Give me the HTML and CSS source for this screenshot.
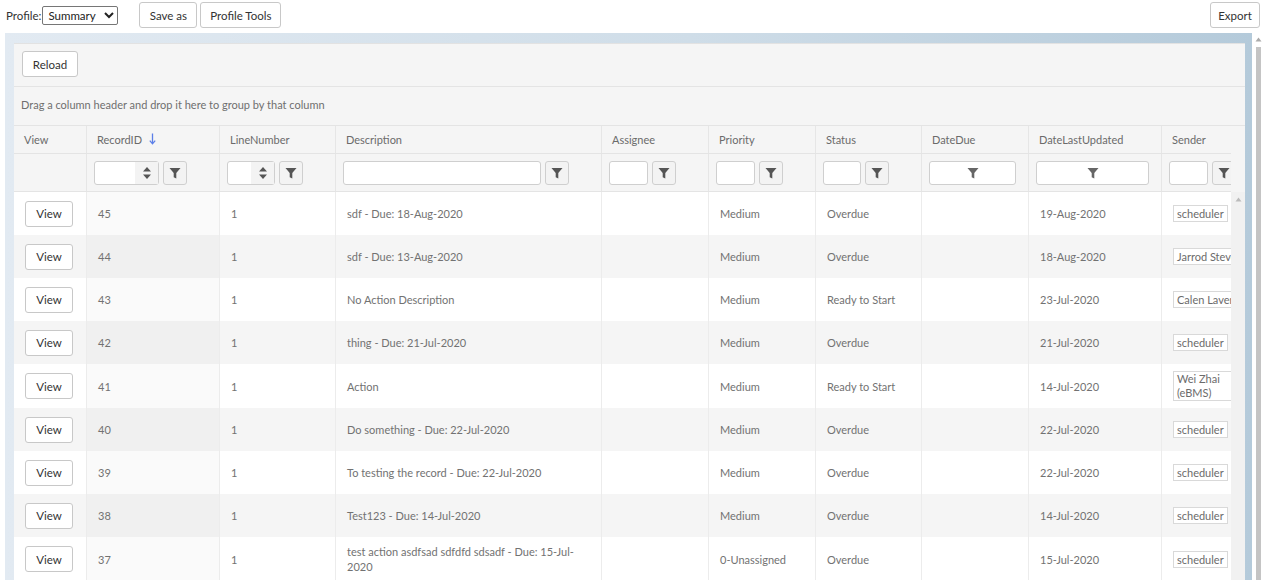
FILE: index.html
```html
<!DOCTYPE html>
<html>
<head>
<meta charset="utf-8">
<link rel="stylesheet" href="styles.css">
</head>
<body>
<div class="topbar">
  <label class="profile">Profile:<select class="sel"><option>Summary</option></select></label>
  <button class="btn top-btn save">Save as</button>
  <button class="btn top-btn">Profile Tools</button>
  <span class="grow"></span>
  <button class="btn top-btn export">Export</button>
</div>
<div class="main">
  <div class="frame">
    <div class="panel">
      <div class="toolbar"><button class="btn reload">Reload</button></div>
      <div class="group">Drag a column header and drop it here to group by that column</div>
      <div class="head">
        <div class="clip">
          <div class="row hdr">
            <div class="c">View</div>
            <div class="c">RecordID <svg class="sort" width="7" height="12" viewBox="0 0 7 12"><path d="M3.5 0.5V10.5M0.8 7.6L3.5 10.8L6.2 7.6" fill="none" stroke="#5b7fe8" stroke-width="1.3"/></svg></div>
            <div class="c">LineNumber</div>
            <div class="c">Description</div>
            <div class="c">Assignee</div>
            <div class="c">Priority</div>
            <div class="c">Status</div>
            <div class="c">DateDue</div>
            <div class="c">DateLastUpdated</div>
            <div class="c">Sender</div>
          </div>
          <div class="row flt">
            <div class="c"></div>
            <div class="c f"><span class="inp num"><span class="spin"><svg width="8" height="14" viewBox="0 0 8 14"><path d="M4 1L8 5.5H0Z M0 8.5H8L4 13Z" fill="#555"/></svg></span></span><span class="fb"><svg width="12" height="12" viewBox="0 0 12 12"><path d="M0.5 1H11.5L7.3 6V11.5L4.7 10.2V6Z" fill="#555"/></svg></span></div>
            <div class="c f"><span class="inp num"><span class="spin"><svg width="8" height="14" viewBox="0 0 8 14"><path d="M4 1L8 5.5H0Z M0 8.5H8L4 13Z" fill="#555"/></svg></span></span><span class="fb"><svg width="12" height="12" viewBox="0 0 12 12"><path d="M0.5 1H11.5L7.3 6V11.5L4.7 10.2V6Z" fill="#555"/></svg></span></div>
            <div class="c f"><span class="inp"></span><span class="fb"><svg width="12" height="12" viewBox="0 0 12 12"><path d="M0.5 1H11.5L7.3 6V11.5L4.7 10.2V6Z" fill="#555"/></svg></span></div>
            <div class="c f"><span class="inp"></span><span class="fb"><svg width="12" height="12" viewBox="0 0 12 12"><path d="M0.5 1H11.5L7.3 6V11.5L4.7 10.2V6Z" fill="#555"/></svg></span></div>
            <div class="c f"><span class="inp"></span><span class="fb"><svg width="12" height="12" viewBox="0 0 12 12"><path d="M0.5 1H11.5L7.3 6V11.5L4.7 10.2V6Z" fill="#555"/></svg></span></div>
            <div class="c f"><span class="inp"></span><span class="fb"><svg width="12" height="12" viewBox="0 0 12 12"><path d="M0.5 1H11.5L7.3 6V11.5L4.7 10.2V6Z" fill="#555"/></svg></span></div>
            <div class="c fd"><span class="inp date"><svg width="12" height="12" viewBox="0 0 12 12"><path d="M0.5 1H11.5L7.3 6V11.5L4.7 10.2V6Z" fill="#666"/></svg></span></div>
            <div class="c fd"><span class="inp date"><svg width="12" height="12" viewBox="0 0 12 12"><path d="M0.5 1H11.5L7.3 6V11.5L4.7 10.2V6Z" fill="#666"/></svg></span></div>
            <div class="c f"><span class="inp"></span><span class="fb"><svg width="12" height="12" viewBox="0 0 12 12"><path d="M0.5 1H11.5L7.3 6V11.5L4.7 10.2V6Z" fill="#555"/></svg></span></div>
          </div>
        </div>
        <div class="head-pad"></div>
      </div>
      <div class="body">
        <div class="clip">
          <div class="row d"><div class="c"><button class="btn view">View</button></div><div class="c s">45</div><div class="c">1</div><div class="c">sdf - Due: 18-Aug-2020</div><div class="c"></div><div class="c">Medium</div><div class="c">Overdue</div><div class="c"></div><div class="c">19-Aug-2020</div><div class="c"><span class="tag">scheduler</span></div></div>
          <div class="row d"><div class="c"><button class="btn view">View</button></div><div class="c s">44</div><div class="c">1</div><div class="c">sdf - Due: 13-Aug-2020</div><div class="c"></div><div class="c">Medium</div><div class="c">Overdue</div><div class="c"></div><div class="c">18-Aug-2020</div><div class="c"><span class="tag">Jarrod Stevens</span></div></div>
          <div class="row d"><div class="c"><button class="btn view">View</button></div><div class="c s">43</div><div class="c">1</div><div class="c">No Action Description</div><div class="c"></div><div class="c">Medium</div><div class="c">Ready to Start</div><div class="c"></div><div class="c">23-Jul-2020</div><div class="c"><span class="tag">Calen Laverty</span></div></div>
          <div class="row d"><div class="c"><button class="btn view">View</button></div><div class="c s">42</div><div class="c">1</div><div class="c">thing - Due: 21-Jul-2020</div><div class="c"></div><div class="c">Medium</div><div class="c">Overdue</div><div class="c"></div><div class="c">21-Jul-2020</div><div class="c"><span class="tag">scheduler</span></div></div>
          <div class="row d"><div class="c"><button class="btn view">View</button></div><div class="c s">41</div><div class="c">1</div><div class="c">Action</div><div class="c"></div><div class="c">Medium</div><div class="c">Ready to Start</div><div class="c"></div><div class="c">14-Jul-2020</div><div class="c"><span class="tag wide">Wei Zhai<br>(eBMS)</span></div></div>
          <div class="row d"><div class="c"><button class="btn view">View</button></div><div class="c s">40</div><div class="c">1</div><div class="c">Do something - Due: 22-Jul-2020</div><div class="c"></div><div class="c">Medium</div><div class="c">Overdue</div><div class="c"></div><div class="c">22-Jul-2020</div><div class="c"><span class="tag">scheduler</span></div></div>
          <div class="row d"><div class="c"><button class="btn view">View</button></div><div class="c s">39</div><div class="c">1</div><div class="c">To testing the record - Due: 22-Jul-2020</div><div class="c"></div><div class="c">Medium</div><div class="c">Overdue</div><div class="c"></div><div class="c">22-Jul-2020</div><div class="c"><span class="tag">scheduler</span></div></div>
          <div class="row d"><div class="c"><button class="btn view">View</button></div><div class="c s">38</div><div class="c">1</div><div class="c">Test123 - Due: 14-Jul-2020</div><div class="c"></div><div class="c">Medium</div><div class="c">Overdue</div><div class="c"></div><div class="c">14-Jul-2020</div><div class="c"><span class="tag">scheduler</span></div></div>
          <div class="row d"><div class="c"><button class="btn view">View</button></div><div class="c s">37</div><div class="c">1</div><div class="c">test action asdfsad sdfdfd sdsadf - Due: 15-Jul-2020</div><div class="c"></div><div class="c">0-Unassigned</div><div class="c">Overdue</div><div class="c"></div><div class="c">15-Jul-2020</div><div class="c"><span class="tag">scheduler</span></div></div>
        </div>
        <div class="vscroll"><svg width="7" height="5" viewBox="0 0 7 5"><path d="M3.5 0.5L6.5 4.5H0.5Z" fill="#bbb"/></svg></div>
      </div>
    </div>
  </div>
  <div class="pscroll">
    <svg class="parrow" width="7" height="5" viewBox="0 0 7 5"><path d="M3.5 0.5L6.5 4.5H0.5Z" fill="#aaa"/></svg>
    <div class="thumb"></div>
  </div>
</div>
</body>
</html>
```
FILE: styles.css
```css
* { box-sizing: border-box; }
html, body { margin: 0; padding: 0; background: #fff; }
body {
  width: 1267px;
  height: 588px;
  overflow: hidden;
  font-family: "Lato", "Liberation Sans", sans-serif;
  font-size: 11px;
  color: #727272;
}
.topbar {
  height: 33px;
  display: flex;
  align-items: center;
  padding: 0 6px 1px 6px;
}
.profile {
  display: flex;
  align-items: center;
  color: #333;
  font-size: 11.5px;
  margin-top: -1px;
}
.sel {
  width: 76px;
  height: 19px;
  margin-left: 1px;
  font-family: inherit;
  font-size: 11.5px;
  color: #222;
  border: 1px solid #767676;
  border-radius: 2px;
  background: #fff;
  padding: 0 0 0 1px;
}
.btn {
  font-family: inherit;
  font-size: 11.5px;
  color: #333;
  background: #fff;
  border: 1px solid #c8c8c8;
  border-radius: 3px;
  padding: 0;
  cursor: pointer;
}
.top-btn { height: 26px; margin-top: -2px; }
.save { width: 58px; margin-left: 21px; }
.top-btn + .top-btn { width: 81px; margin-left: 3px; }
.grow { flex: 1; }
.top-btn.export { width: 50px; margin-left: 0; margin-right: 1px; }

.main {
  height: 547px;
  display: flex;
  overflow: hidden;
}
.frame {
  margin-left: 5px;
  width: 1247px;
  height: 547px;
  padding: 10px 7px 0 9px;
  background: linear-gradient(to right, #e2eaf2 0%, #cfdde8 55%, #b4cada 100%);
  overflow: hidden;
}
.panel {
  width: 1231px;
  height: 537px;
  background: #f5f5f5;
  box-shadow: inset 0 1px 0 #e2e2e2;
  overflow: hidden;
}
.toolbar {
  height: 44px;
  padding: 8px 8px;
  border-bottom: 1px solid #e4e4e4;
}
.reload { width: 56px; height: 26px; }
.group {
  height: 39px;
  padding: 0 7px 4px 7px;
  display: flex;
  align-items: center;
  border-bottom: 1px solid #e4e4e4;
  color: #6f6f6f;
  font-size: 11px;
}
.head { display: flex; }
.clip { width: 1217px; overflow: hidden; }
.head-pad { width: 14px; }
.row {
  display: grid;
  grid-template-columns: 72px 133px 116px 266px 107px 107px 106px 107px 133px 107px;
  width: 1254px;
}
.c {
  border-left: 1px solid #e6e6e6;
  display: flex;
  align-items: center;
  min-width: 0;
}
.c:first-child { border-left: none; }
.hdr { height: 28px; border-bottom: 1px solid #e4e4e4; }
.hdr .c { padding-left: 10px; padding-bottom: 1px; color: #6b6b6b; }
.sort { margin-left: 7px; }
.flt { height: 38px; border-bottom: 1px solid #e4e4e4; }
.f { padding: 0 32px 0 7px; gap: 4px; }
.fd { padding: 0 12px 0 7px; }
.inp {
  flex: 1;
  height: 24px;
  background: #fff;
  border: 1px solid #cfcfcf;
  border-radius: 3px;
  display: flex;
  justify-content: flex-end;
}
.spin {
  width: 23px;
  height: 22px;
  background: #f3f3f3;
  display: flex;
  align-items: center;
  justify-content: center;
}
.date { justify-content: center; align-items: center; }
.fb {
  width: 24px;
  height: 24px;
  flex: none;
  border: 1px solid #cfcfcf;
  border-radius: 3px;
  background: #f3f3f3;
  display: flex;
  align-items: center;
  justify-content: center;
}
.body {
  display: flex;
  background: #fff;
  height: 400px;
}
.body .clip { background: #fff; }
.d { min-height: 43px; }
.d:nth-child(even) { background: #f5f5f5; }
.d .c { padding: 7px 11px; border-left-color: #ececec; line-height: 15px; }
.d .c.s { background: rgba(0, 0, 0, 0.018); }
.view { width: 48px; height: 26px; }
.tag {
  display: inline-block;
  white-space: nowrap;
  border: 1px solid #d9d9d9;
  background: #fff;
  padding: 0 3px;
  line-height: 15px;
  color: #6b6b6b;
}
.tag.wide { min-width: 72px; line-height: 14px; }
.vscroll {
  width: 14px;
  background: #f1f1f1;
  display: flex;
  justify-content: center;
  padding-top: 5px;
}
.pscroll {
  width: 15px;
  display: flex;
  flex-direction: column;
  align-items: flex-start;
  padding-left: 4px;
}
.parrow { margin-top: 4px; margin-left: -1px; }
.thumb {
  width: 5px;
  flex: 1;
  margin-top: 5px;
  background: #c4c4c4;
}
```
